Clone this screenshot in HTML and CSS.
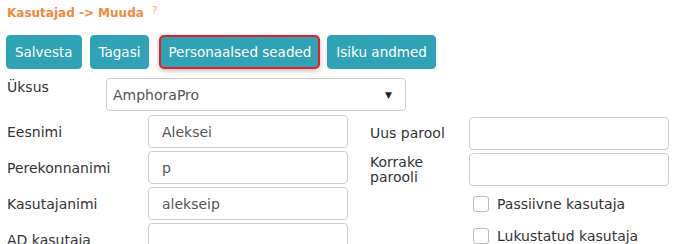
FILE: index.html
```html
<!DOCTYPE html>
<html lang="et">
<head>
    <meta charset="UTF-8">
    <title>Kasutajad -&gt; Muuda</title>
    <link rel="stylesheet" href="styles.css">
</head>
<body>
    <div class="page">
        <h1 class="title">Kasutajad -&gt; Muuda <span class="help">?</span></h1>

        <div class="toolbar">
            <button class="btn">Salvesta</button>
            <button class="btn">Tagasi</button>
            <button class="btn active">Personaalsed seaded</button>
            <button class="btn">Isiku andmed</button>
        </div>

        <div class="unit-row">
            <label class="unit-label">Üksus</label>
            <div class="select">
                <span>AmphoraPro</span>
                <span class="arrow">&#9660;</span>
            </div>
        </div>

        <div class="fields">
            <div class="col left">
                <div class="row"><label>Eesnimi</label><input class="field" value="Aleksei"></div>
                <div class="row"><label>Perekonnanimi</label><input class="field" value="p"></div>
                <div class="row"><label>Kasutajanimi</label><input class="field" value="alekseip"></div>
                <div class="row"><label>AD kasutaja</label><input class="field" value=""></div>
            </div>
            <div class="col right">
                <div class="row"><label>Uus parool</label><input class="field" type="password"></div>
                <div class="row"><label>Korrake<br>parooli</label><input class="field" type="password"></div>
                <div class="check"><span class="box"></span>Passiivne kasutaja</div>
                <div class="check"><span class="box"></span>Lukustatud kasutaja</div>
            </div>
        </div>
    </div>
</body>
</html>
```

FILE: styles.css
```css
* {
    box-sizing: border-box;
}

:root {
    --btn-color: #2fa3b5;
    --label-color: #333;
    --border-color: #ccc;
}

body {
    margin: 0;
    font-family: "DejaVu Sans", Verdana, sans-serif;
    color: var(--label-color);
    background: #fff;
    overflow: hidden;
}

.page {
    padding: 6px 7px;
}

.title {
    margin: 0;
    font-size: 12px;
    line-height: 14px;
    font-weight: bold;
    color: #f0893d;
}

.help {
    font-size: 10px;
    font-weight: normal;
    color: #f6a56d;
    margin-left: 4px;
    vertical-align: top;
    position: relative;
    top: -2px;
}

.toolbar {
    display: flex;
    gap: 8px;
    margin-top: 15px;
    margin-left: -1px;
}

.btn {
    font-family: inherit;
    font-size: 13.5px;
    color: #fff;
    background: var(--btn-color);
    border: 1px solid var(--btn-color);
    border-radius: 4px;
    height: 34px;
    padding: 0 8px;
    cursor: pointer;
}

.btn.active {
    border: 2px solid #ee1c25;
    border-radius: 5px;
    padding: 0 7px;
    margin-left: 2px;
    margin-right: -1px;
    box-shadow: 0 2px 5px rgba(0, 0, 0, 0.25);
}

.unit-row {
    display: flex;
    align-items: flex-start;
    margin-top: 9px;
}

.unit-label {
    width: 99px;
    font-size: 14px;
    padding-top: 1px;
}

.select {
    width: 300px;
    height: 33px;
    border: 1px solid var(--border-color);
    border-radius: 4px;
    display: flex;
    align-items: center;
    justify-content: space-between;
    padding: 0 13px 0 6px;
    font-size: 14px;
    color: #555;
}

.arrow {
    font-size: 9px;
    color: #222;
}

.fields {
    display: flex;
    gap: 22px;
    margin-top: 4px;
}

.col {
    display: flex;
    flex-direction: column;
    gap: 3px;
}

.col.right {
    padding-top: 2px;
}

.row {
    display: flex;
    align-items: flex-start;
}

.row label {
    font-size: 14px;
    line-height: 15px;
    padding-top: 10px;
}

.left .row label {
    width: 141px;
}

.right .row label {
    width: 99px;
    padding-top: 9px;
}

.right .row:nth-child(2) label {
    padding-top: 2px;
}

.field {
    width: 200px;
    height: 33px;
    border: 1px solid var(--border-color);
    border-radius: 4px;
    padding: 0 13px;
    font-family: inherit;
    font-size: 14px;
    color: #555;
    outline: none;
}

.check {
    display: flex;
    align-items: center;
    gap: 8px;
    margin-left: 103px;
    height: 29px;
    font-size: 14px;
}

.check:first-of-type {
    margin-top: 6px;
}

.box {
    width: 16px;
    height: 16px;
    border: 1px solid #bbb;
    border-radius: 3px;
    background: #fff;
}
```
